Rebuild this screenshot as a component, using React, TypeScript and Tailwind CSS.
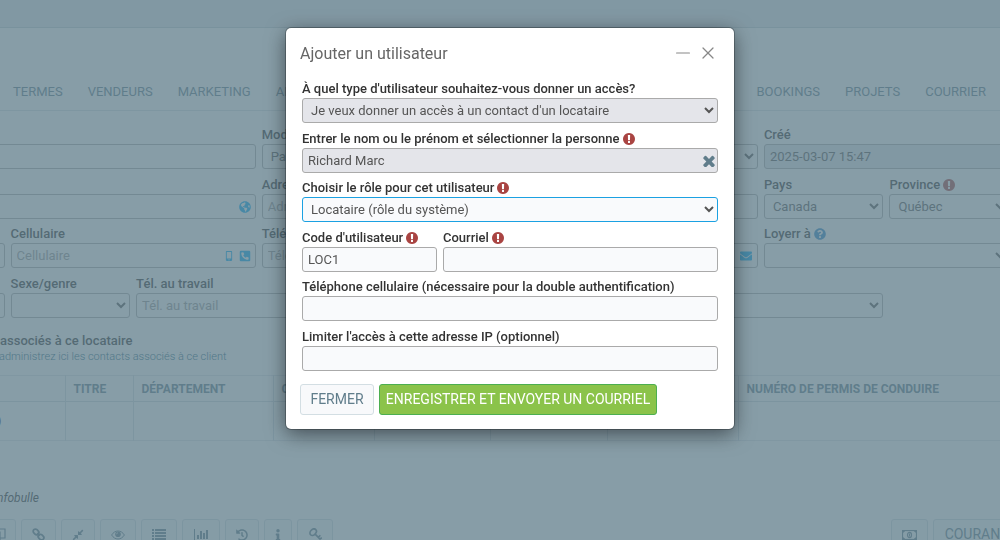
import type { ReactNode } from 'react'
import { clsx } from 'clsx'
import { X, Minus } from 'lucide-react'
import {
  FaCompressAlt,
  FaEnvelope,
  FaGlobeAmericas,
  FaHistory,
  FaInfo,
  FaMobileAlt,
  FaPhoneSquareAlt,
  FaQuestionCircle,
} from 'react-icons/fa'

const inputClass = 'w-full h-[25px] px-[5px] border border-[#aaa] rounded-[3px] text-[13px] text-[#555] placeholder:text-[#999] outline-none'
const selectClass = 'w-full h-[25px] px-1 border border-[#aaa] rounded-[3px] text-[13px] text-[#555] outline-none'

function Required() {
  return (
    <svg viewBox="128 128 1536 1536" className="w-3 h-3 fill-[#a94442]" aria-label="Obligatoire">
      <path d="M896 128q209 0 385.500 103t279.500 279.500 103 385.500-103 385.500-279.500 279.500-385.500 103-385.500-103-279.500-279.500-103-385.500 103-385.500 279.500-279.500 385.500-103zm128 1247v-190q0-14-9-23.500t-22-9.500h-192q-13 0-23 10t-10 23v190q0 13 10 23t23 10h192q13 0 22-9.500t9-23.500zm-2-344l18-621q0-12-10-18-10-8-24-8h-220q-14 0-24 8-10 6-10 18l17 621q0 10 10 17.500t24 7.500h185q14 0 23.500-7.500t10.500-17.500z" />
    </svg>
  )
}

function Times() {
  return (
    <svg viewBox="280 280 1232 1232" className="w-3 h-3 fill-[#607d8b]">
      <path d="M1490 1322q0 40-28 68l-136 136q-28 28-68 28t-68-28l-294-294-294 294q-28 28-68 28t-68-28l-136-136q-28-28-28-68t28-68l294-294-294-294q-28-28-28-68t28-68l136-136q28-28 68-28t68 28l294 294 294-294q28-28 68-28t68 28l136 136q28 28 28 68t-28 68l-294 294 294 294q28 28 28 68z" />
    </svg>
  )
}

function CopyIcon() {
  return (
    <svg viewBox="0 0 14 14" className="w-[14px] h-[14px]" fill="none" stroke="currentColor" strokeWidth="1.200">
      <path d="M5 3.500V1h8v9H8.500M1 4h7v9H1z" />
    </svg>
  )
}

function LinkIcon() {
  return (
    <svg viewBox="0 0 14 14" className="w-[13px] h-[13px]" fill="none" stroke="currentColor" strokeWidth="1.900">
      <rect x="1" y="1.800" width="6.600" height="4.800" rx="2.400" transform="rotate(45 4.300 4.200)" />
      <rect x="6.400" y="7.400" width="6.600" height="4.800" rx="2.400" transform="rotate(45 9.700 9.800)" />
      <path d="M5.600 5.600l2.800 2.800" />
    </svg>
  )
}

function EyeIcon() {
  return (
    <svg viewBox="0 0 14 10" className="w-[14px] h-[10px]" fill="none" stroke="currentColor">
      <path d="M0.600 5C2.200 2.400 4.500 1 7 1s4.800 1.400 6.400 4C11.800 7.600 9.500 9 7 9S2.200 7.600 0.600 5z" />
      <circle cx="7" cy="4.300" r="2.800" fill="currentColor" stroke="none" />
      <path d="M5.500 4.300A1.500 1.500 0 0 1 7 2.800" stroke="#f3f5f7" strokeWidth="0.700" />
    </svg>
  )
}

function ListIcon() {
  return (
    <svg viewBox="0 0 14 11" className="w-[14px] h-[11px]" fill="currentColor">
      <path d="M0 0h2v2H0zM3 0h11v2H3zM0 3h2v2H0zM3 3h11v2H3zM0 6h2v2H0zM3 6h11v2H3zM0 9h2v2H0zM3 9h11v2H3z" />
    </svg>
  )
}

function ChartIcon() {
  return (
    <svg viewBox="0 0 15 12" className="w-[15px] h-3" fill="currentColor">
      <path d="M0 0h1v11h14v1H0zM3 6h2v4H3zM6 2h2v8H6zM9 4h2v6H9zM12 1h2v9h-2z" />
    </svg>
  )
}

function KeyIcon() {
  return (
    <svg viewBox="0 0 14 14" className="w-[13px] h-[13px]" fill="none" stroke="currentColor" strokeWidth="1.800">
      <ellipse cx="4.500" cy="4.500" rx="3.900" ry="2.900" transform="rotate(-45 4.500 4.500)" />
      <path d="M6.600 6.600l5.600 5.600M10 10l2.200-2.200M12 12l1.800-1.800" />
    </svg>
  )
}

function MoneyIcon() {
  return (
    <svg viewBox="0 0 15 10" className="w-[15px] h-[10px]" fill="none" stroke="currentColor">
      <rect x="0.500" y="0.500" width="14" height="9" strokeWidth="1.200" />
      <ellipse cx="7.500" cy="5" rx="2" ry="2.600" strokeWidth="1.200" />
      <path d="M7.500 3.500v3" />
      <path d="M1 1h1.500L1 2.500zM14 1h-1.500L14 2.500zM1 9h1.500L1 7.500zM14 9h-1.500L14 7.500z" fill="currentColor" />
    </svg>
  )
}

type FieldProps = {
  id: string
  label?: string
  mark?: ReactNode
  className?: string
  children: ReactNode
}

function Field({ id, label, mark, className, children }: FieldProps) {
  return (
    <div className={clsx('min-w-0', className)}>
      <div className="flex items-center gap-[3px] h-[18px] whitespace-nowrap">
        {label && <label htmlFor={id} className="text-[13px] leading-[18px] font-medium text-[#333]">{label}</label>}
        {mark}
      </div>
      <div className="relative">{children}</div>
    </div>
  )
}

// icons sitting inside the right end of an input
function Addon({ children }: { children: ReactNode }) {
  return <span className="absolute right-[5px] inset-y-0 flex items-center gap-[6px] text-[#03a9f4]">{children}</span>
}

function FormRow({ children }: { children: ReactNode }) {
  return <div className="grid grid-cols-9 gap-x-[6px]">{children}</div>
}

function PageForm() {
  return (
    <form className="-ml-[115px] -mr-[9px] pt-[15px] flex flex-col gap-[6px]">
      <div className="flex flex-col gap-[7px]">
        <FormRow>
          <Field id="nom" className="col-span-3">
            <input id="nom" aria-label="Nom" className={inputClass} />
          </Field>
          <Field id="mode" label="Mode de paiement" className="col-span-4">
            <select id="mode" className={selectClass}><option>Paiement</option></select>
          </Field>
          <Field id="cree" label="Créé" className="col-span-2">
            <input id="cree" readOnly value="2025-03-07 15:47" className={clsx(inputClass, 'bg-[#e4e5ea]')} />
          </Field>
        </FormRow>
        <FormRow>
          <Field id="site" className="col-span-3">
            <input id="site" aria-label="Site web" className={inputClass} />
            <Addon><FaGlobeAmericas className="w-3 h-3" /></Addon>
          </Field>
          <Field id="adresse" label="Adresse" className="col-span-4">
            <input id="adresse" placeholder="Adresse" className={inputClass} />
          </Field>
          <Field id="pays" label="Pays">
            <select id="pays" className={selectClass}><option>Canada</option></select>
          </Field>
          <Field id="province" label="Province" mark={<Required />}>
            <select id="province" className={selectClass}><option>Québec</option></select>
          </Field>
        </FormRow>
      </div>
      <div className="flex flex-col gap-[7px]">
        <FormRow>
          <Field id="poste">
            <input id="poste" aria-label="Poste" className={inputClass} />
          </Field>
          <Field id="cell" label="Cellulaire" className="col-span-2">
            <input id="cell" placeholder="Cellulaire" className={inputClass} />
            <Addon>
              <FaMobileAlt className="w-2 h-[10px]" />
              <FaPhoneSquareAlt className="w-3 h-3" />
            </Addon>
          </Field>
          <Field id="tel" label="Téléphone" className="col-span-4">
            <input id="tel" placeholder="Téléphone" className={inputClass} />
            <Addon><FaEnvelope className="w-[14px] h-3" /></Addon>
          </Field>
          <Field id="loyer" label="Loyerr à" mark={<FaQuestionCircle className="w-3 h-3 text-[#2f86c9]" />} className="col-span-2">
            <select id="loyer" className={selectClass} />
          </Field>
        </FormRow>
        <FormRow>
          <Field id="naissance">
            <input id="naissance" aria-label="Naissance" className={inputClass} />
          </Field>
          <Field id="sexe" label="Sexe/genre">
            <select id="sexe" className={selectClass} />
          </Field>
          <Field id="travail" label="Tél. au travail" className="col-span-3">
            <input id="travail" placeholder="Tél. au travail" className={inputClass} />
          </Field>
          <Field id="langue" className="col-span-3">
            <select id="langue" aria-label="Langue" className={selectClass} />
          </Field>
        </FormRow>
      </div>
    </form>
  )
}

const columns = [
  { name: '', width: 'w-[65px]' },
  { name: 'TITRE', width: 'w-[68px]' },
  { name: 'DÉPARTEMENT', width: 'w-[140px]' },
  { name: 'COURRIEL', width: 'w-[101px]' },
  { name: '', width: 'w-[116px]' },
  { name: '', width: 'w-[117px]' },
  { name: '', width: 'w-[131px]' },
  { name: 'NUMÉRO DE PERMIS DE CONDUIRE', width: '' },
]

function Contacts() {
  return (
    <section className="pt-[15px]">
      <h2 className="text-[13px] leading-4 font-medium text-[#333]">associés à ce locataire</h2>
      <p className="pt-px -ml-px text-[11px] leading-[14px] font-light text-[#1d6680]">administrez ici les contacts associés à ce client</p>
      <table className="mt-[11px] w-full table-fixed border-collapse text-left">
        <thead>
          <tr className="h-[26px] border-t border-[#dde2e8] border-b border-b-[#cfd6dc]">
            {columns.map((c, i) => (
              <th key={i} className={clsx('pl-2 border-r border-[#d2dae0] last:border-r-0 text-[12px] font-bold text-[#607d8b] whitespace-nowrap', c.width)}>{c.name}</th>
            ))}
          </tr>
        </thead>
        <tbody>
          <tr className="h-[39px] border-b border-[#dde2e8]">
            {columns.map((c, i) => (
              <td key={i} className="border-r border-[#d2dae0] last:border-r-0 text-[13px] text-[#333]">{i === 0 && <span className="-ml-[3px]">)</span>}</td>
            ))}
          </tr>
        </tbody>
      </table>
    </section>
  )
}

const tools = [
  { label: 'Copier', icon: <CopyIcon />, width: 'w-[35px] -ml-[19px]' },
  { label: 'Lien', icon: <LinkIcon />, width: 'w-[35px]' },
  { label: 'Fusionner', icon: <FaCompressAlt />, width: 'w-[34px]' },
  { label: 'Voir', icon: <EyeIcon />, width: 'w-9' },
  { label: 'Liste', icon: <ListIcon />, width: 'w-9' },
  { label: 'Statistiques', icon: <ChartIcon />, width: 'w-[38px]' },
  { label: 'Historique', icon: <FaHistory />, width: 'w-[34px]' },
  { label: 'Information', icon: <FaInfo />, width: 'w-7' },
  { label: 'Accès', icon: <KeyIcon />, width: 'w-9' },
]

const toolClass = 'h-[31px] shrink-0 flex items-center justify-center border border-[#d0d9de] rounded-[3px] bg-[#f3f5f7] text-[12px] text-[#607d8b]'

function Toolbar() {
  return (
    <div className="mt-[13px] flex justify-between whitespace-nowrap">
      <div className="flex gap-[5px]">
        {tools.map(t => (
          <button key={t.label} type="button" aria-label={t.label} className={clsx(toolClass, t.width)}>{t.icon}</button>
        ))}
      </div>
      <div className="flex gap-[5px] -mr-[20px]">
        <button type="button" aria-label="Paiement" className={clsx(toolClass, 'w-[37px]')}><MoneyIcon /></button>
        <button type="button" className={clsx(toolClass, 'w-[87px] !text-[14px]')}>COURANT</button>
      </div>
    </div>
  )
}

function Page() {
  return (
    <div className="h-screen overflow-hidden bg-[#fafafb]">
      <header className="h-7 bg-[#e4e5ea] border-b border-[#c4cdd2]" />
      <nav className="h-[83px] pt-[54px] pl-[13px] pr-[14px] flex justify-between border-b border-[#d8dee2] text-[13px] leading-5 text-[#607d8b]">
        <div className="flex gap-[25px]">
          <a href="#termes">TERMES</a>
          <a href="#vendeurs">VENDEURS</a>
          <a href="#marketing">MARKETING</a>
          <a href="#annonces">ANNONCES</a>
        </div>
        <div className="flex gap-[25px]">
          <a href="#bookings">BOOKINGS</a>
          <a href="#projets">PROJETS</a>
          <a href="#courrier">COURRIER</a>
        </div>
      </nav>
      <PageForm />
      <Contacts />
      <p className="mt-[49px] -ml-[3px] text-[12px] leading-4 italic text-[#333]">nfobulle</p>
      <Toolbar />
    </div>
  )
}

function AddUserDialog() {
  return (
    <div
      role="dialog"
      aria-labelledby="dialog-title"
      className="w-[448px] pb-[14px] bg-white rounded-[5px] shadow-[0_0_0_1px_rgba(0,0,0,0.25),0_5px_20px_rgba(0,0,0,0.5)]"
    >
      <div className="h-[52px] pl-[14px] pr-4 flex items-center justify-between">
        <h1 id="dialog-title" className="text-[16px] text-[#666]">Ajouter un utilisateur</h1>
        <div className="flex items-center gap-1 pb-[3px] text-[#888]">
          <button type="button" aria-label="Réduire"><Minus className="w-[22px] h-[22px]" strokeWidth={1.3} /></button>
          <button type="button" aria-label="Fermer la fenêtre"><X className="w-5 h-5" strokeWidth={1.5} /></button>
        </div>
      </div>
      <form className="px-4 flex flex-col gap-[6px]">
        <div className="flex flex-col gap-[7px]">
          <Field id="type" label="À quel type d'utilisateur souhaitez-vous donner un accès?">
            <select id="type" className={clsx(selectClass, 'bg-[#e4e5ea]')}>
              <option>Je veux donner un accès à un contact d'un locataire</option>
            </select>
          </Field>
          <Field id="personne" label="Entrer le nom ou le prénom et sélectionner la personne" mark={<Required />}>
            <input id="personne" defaultValue="Richard Marc" className={clsx(inputClass, 'bg-[#e4e5ea]')} />
            <button type="button" aria-label="Effacer" className="absolute right-[3px] inset-y-0"><Times /></button>
          </Field>
        </div>
        <div className="flex flex-col gap-[7px]">
          <Field id="role" label="Choisir le rôle pour cet utilisateur" mark={<Required />}>
            <select id="role" className={clsx(selectClass, 'bg-[#f9fafc] !border-[#1ba1e2]')}>
              <option>Locataire (rôle du système)</option>
            </select>
          </Field>
          <div className="flex gap-[6px]">
            <Field id="code" label="Code d'utilisateur" mark={<Required />} className="w-[135px]">
              <input id="code" defaultValue="LOC1" className={clsx(inputClass, 'bg-[#f9fafc]')} />
            </Field>
            <Field id="courriel" label="Courriel" mark={<Required />} className="flex-1">
              <input id="courriel" className={clsx(inputClass, 'bg-[#f9fafc]')} />
            </Field>
          </div>
        </div>
        <div className="flex flex-col gap-[7px]">
          <Field id="mobile" label="Téléphone cellulaire (nécessaire pour la double authentification)">
            <input id="mobile" className={clsx(inputClass, 'bg-[#f9fafc]')} />
          </Field>
          <Field id="ip" label="Limiter l'accès à cette adresse IP (optionnel)">
            <input id="ip" className={clsx(inputClass, 'bg-[#f9fafc]')} />
          </Field>
        </div>
      </form>
      <div className="mt-[13px] px-[14px] flex gap-[5px] text-[14px] whitespace-nowrap">
        <button type="button" className="w-[74px] h-[31px] rounded-[3px] border border-[#d3dee3] bg-[#f8f9fb] text-[#607d8b]">FERMER</button>
        <button type="button" className="w-[278px] h-[31px] rounded-[3px] border border-[#4caf50] bg-[#8bc34a] text-white">ENREGISTRER ET ENVOYER UN COURRIEL</button>
      </div>
    </div>
  )
}

export default function App() {
  return (
    <div className="font-['Roboto',sans-serif]">
      <Page />
      <div className="fixed inset-0 pt-7 pl-5 flex items-start justify-center bg-[#607d8b]/75">
        <AddUserDialog />
      </div>
    </div>
  )
}
